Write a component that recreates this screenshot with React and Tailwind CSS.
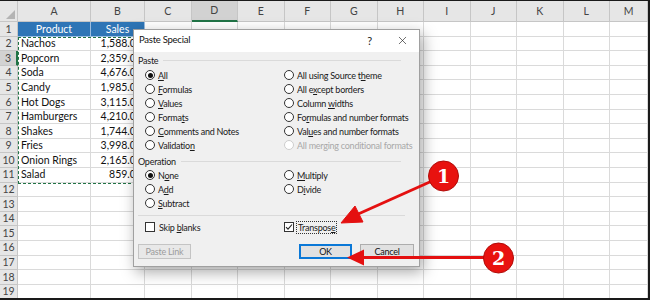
import { X } from 'lucide-react'

const COLS = ['A', 'B', 'C', 'D', 'E', 'F', 'G', 'H', 'I', 'J', 'K', 'L', 'M']
const DATA = [
  ['Nachos', '1,588.00'],
  ['Popcorn', '2,359.00'],
  ['Soda', '4,676.00'],
  ['Candy', '1,985.00'],
  ['Hot Dogs', '3,115.00'],
  ['Hamburgers', '4,210.00'],
  ['Shakes', '1,744.00'],
  ['Fries', '3,998.00'],
  ['Onion Rings', '2,165.00'],
  ['Salad', '859.00'],
]

function Radio({ checked, disabled, children }) {
  return (
    <div className="flex items-center h-[14px] gap-[3px] whitespace-nowrap">
      <span className={`shrink-0 w-[10px] h-[10px] rounded-full border bg-white flex items-center justify-center ${disabled ? 'border-[#cdcdcd]' : 'border-[#333]'}`}>
        {checked && <span className="w-[5px] h-[5px] rounded-full bg-[#111]" />}
      </span>
      <span className={disabled ? 'text-[#a8a8a8]' : 'text-[#1a1a1a]'}>{children}</span>
    </div>
  )
}

function Check({ checked, focus, children }) {
  return (
    <div className="flex items-center h-[14px] gap-[3px] whitespace-nowrap">
      <span className="shrink-0 w-[10px] h-[10px] border border-[#333] bg-white flex items-center justify-center">
        {checked && (
          <svg width="8" height="8" viewBox="0 0 8 8">
            <path d="M1 4.2 L3 6.2 L7 1.5" fill="none" stroke="#222" strokeWidth="1.1" />
          </svg>
        )}
      </span>
      <span className={`text-[#1a1a1a] px-[1px] py-[1px] ${focus ? 'outline outline-1 outline-dotted outline-[#333]' : ''}`}>{children}</span>
    </div>
  )
}

function Section({ label }) {
  return (
    <div className="flex items-center h-[13px]">
      <span className="text-[#1a1a1a]">{label}</span>
      <span className="flex-1 h-px bg-[#dadada] ml-[5px] mr-[14px]" />
    </div>
  )
}

function Dialog() {
  return (
    <div className="absolute left-[133px] top-[28px] w-[287px] h-[238px] bg-[#f0f0f0] border border-[#a0a0a0] shadow-[3px_5px_14px_rgba(0,0,0,0.35)] z-10 font-['Lato',sans-serif] text-[9px] tracking-[-0.25px] leading-none">
      <div className="h-[22px] bg-white flex items-center pl-[5px] pb-[2px]">
        <span className="text-[#111] text-[9.5px]">Paste Special</span>
        <span className="ml-auto text-[#222] text-[11px] mr-[24px]">?</span>
        <X size={13} strokeWidth={1.2} className="text-[#222] mr-[10px]" />
      </div>
      <div className="px-[4px] pt-[2px]">
        <Section label="Paste" />
        <div className="grid grid-cols-[139px_1fr] pl-[7px] mt-[1px]">
          <div>
            <Radio checked><u>A</u>ll</Radio>
            <Radio><u>F</u>ormulas</Radio>
            <Radio><u>V</u>alues</Radio>
            <Radio>Forma<u>t</u>s</Radio>
            <Radio><u>C</u>omments and Notes</Radio>
            <Radio>Validatio<u>n</u></Radio>
          </div>
          <div>
            <Radio>All using Source t<u>h</u>eme</Radio>
            <Radio>All e<u>x</u>cept borders</Radio>
            <Radio>Column <u>w</u>idths</Radio>
            <Radio>Fo<u>r</u>mulas and number formats</Radio>
            <Radio>Val<u>u</u>es and number formats</Radio>
            <Radio disabled>All merging conditional formats</Radio>
          </div>
        </div>
        <div className="mt-[3px]">
          <Section label="Operation" />
        </div>
        <div className="grid grid-cols-[139px_1fr] pl-[7px]">
          <div>
            <Radio checked>N<u>o</u>ne</Radio>
            <Radio>A<u>d</u>d</Radio>
            <Radio><u>S</u>ubtract</Radio>
          </div>
          <div>
            <Radio><u>M</u>ultiply</Radio>
            <Radio>D<u>i</u>vide</Radio>
          </div>
        </div>
        <div className="h-px bg-[#dadada] mt-[5px] mr-[10px]" />
        <div className="grid grid-cols-[139px_1fr] pl-[7px] mt-[4px]">
          <Check>Skip <u>b</u>lanks</Check>
          <Check checked focus>Transpos<u>e</u></Check>
        </div>
        <div className="flex items-center mt-[10px] pr-[1px]">
          <div className="w-[53px] h-[15px] border border-[#c4c4c4] bg-[#e8e8e8] text-[#9c9c9c] flex items-center justify-center">Paste Link</div>
          <div className="w-[53px] h-[15px] ml-auto border-2 border-[#0a78d7] bg-[#e1e1e1] text-[#111] flex items-center justify-center">OK</div>
          <div className="w-[54px] h-[15px] ml-[8px] border border-[#adadad] bg-[#e1e1e1] text-[#111] flex items-center justify-center">Cancel</div>
        </div>
      </div>
    </div>
  )
}

function Annotations() {
  return (
    <svg className="absolute inset-0 z-20 pointer-events-none" width="650" height="300" viewBox="0 0 650 300">
      <line x1="432" y1="180" x2="356" y2="214" stroke="#e41010" strokeWidth="3" />
      <polygon points="341,222 363,221 355,205" fill="#e41010" stroke="#e41010" strokeWidth="1" strokeLinejoin="round" />
      <line x1="485" y1="256.5" x2="360" y2="256.5" stroke="#e41010" strokeWidth="3" />
      <polygon points="347,256.5 364,248.5 364,264.5" fill="#e41010" />
      <circle cx="443.5" cy="175" r="15" fill="#e8120f" stroke="#b00b08" strokeWidth="1" />
      <text x="443.5" y="181.5" textAnchor="middle" fill="white" fontSize="19" fontWeight="bold" fontFamily="DejaVu Serif, serif">1</text>
      <circle cx="498.5" cy="257" r="15" fill="#e8120f" stroke="#b00b08" strokeWidth="1" />
      <text x="498.5" y="263.5" textAnchor="middle" fill="white" fontSize="19" fontWeight="bold" fontFamily="DejaVu Serif, serif">2</text>
    </svg>
  )
}

export default function App() {
  const rows = Array.from({ length: 19 }, (_, i) => i + 1)
  return (
    <div className="relative w-[650px] h-[300px] overflow-hidden bg-white border-t border-r-2 border-b-2 border-[#1a1a1a] font-['Lato',sans-serif]">
      <div className="grid grid-cols-[18px_73px_54px_repeat(10,46.5px)_1fr] grid-rows-[21px_repeat(19,14.6px)] text-[10.5px] leading-none text-[#111]">
        <div className="bg-[#e6e6e6] border-r border-b border-[#c6c6c6] flex items-end justify-end pr-[2px] pb-[2px]">
          <svg width="9" height="9" viewBox="0 0 9 9"><polygon points="9,0 9,9 0,9" fill="#b4b4b4" /></svg>
        </div>
        {COLS.map((c) => (
          <div
            key={c}
            className={`flex items-center justify-center text-[10.5px] text-[#444] border-r border-[#c6c6c6] ${c === 'D' ? 'bg-[#d2d2d2] border-b-2 border-b-[#217346]' : 'bg-[#e6e6e6] border-b border-b-[#c6c6c6]'}`}
          >
            {c}
          </div>
        ))}
        {rows.map((r) => (
          <Row key={r} r={r} />
        ))}
      </div>
      <div className="absolute left-[18px] top-[36px] w-[128px] h-[147px] border-[1.5px] border-dashed border-[#217346] z-[5]" />
      <Dialog />
      <Annotations />
    </div>
  )
}

function Row({ r }) {
  const d = r >= 2 && r <= 11 ? DATA[r - 2] : null
  return (
    <>
      <div className={`flex items-center justify-center text-[10.5px] text-[#444] border-b border-[#c6c6c6] ${r === 3 ? 'bg-[#d2d2d2] border-r-2 border-r-[#217346]' : 'bg-[#e6e6e6] border-r border-r-[#c6c6c6]'}`}>
        {r}
      </div>
      {COLS.map((c) => {
        if (r === 1 && (c === 'A' || c === 'B')) {
          return (
            <div key={c} className="bg-[#2e75b6] text-white flex items-center justify-center border-r border-b border-[#9bbde0]">
              {c === 'A' ? 'Product' : 'Sales'}
            </div>
          )
        }
        if (d && c === 'A') {
          return <div key={c} className="flex items-center pl-[3px] border-r border-b border-[#dadada] whitespace-nowrap">{d[0]}</div>
        }
        if (d && c === 'B') {
          return <div key={c} className="flex items-center justify-end pr-[2px] border-r border-b border-[#dadada] whitespace-nowrap">{d[1]}</div>
        }
        return <div key={c} className="border-r border-b border-[#dadada]" />
      })}
    </>
  )
}
